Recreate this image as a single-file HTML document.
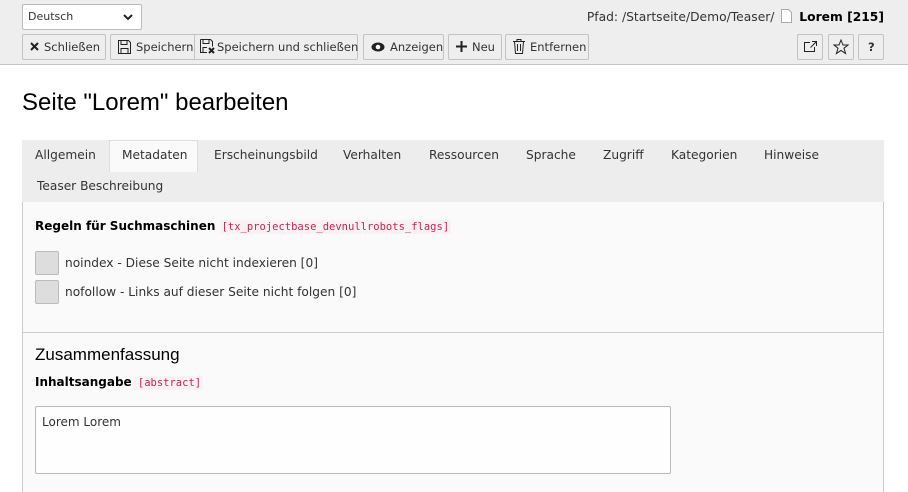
<!DOCTYPE html>
<html><head><meta charset="utf-8"><style>
*{box-sizing:border-box;margin:0;padding:0}
html,body{width:908px;height:492px;overflow:hidden}
body{background:#fff;font-family:"DejaVu Sans",Verdana,sans-serif;font-size:12px;color:#333;position:relative}
.a{position:absolute}
.top{left:0;top:0;width:908px;height:65px;background:#eee;border-bottom:1px solid #c3c3c3}
.btn{position:absolute;top:34px;height:26px;background:#eee;border:1px solid #c3c3c3;border-radius:2px;font-size:11.5px;line-height:24px;color:#333;white-space:nowrap;padding-left:7px}
.btn svg{vertical-align:middle;margin-right:5px;position:relative;top:-1px}
.sel{left:22px;top:4px;width:120px;height:26px;background:#fff;border:1px solid #bbb;border-radius:2px;font-size:11px;line-height:24px;padding-left:5px}
.tabs{left:22px;top:140px;width:862px;height:63px;background:#ededed;border-bottom:1px solid #ccc}
.tab{position:absolute;font-size:12.2px;line-height:31px;color:#333}
.panel{left:22px;top:202px;width:862px;height:300px;background:#fafafa;border:1px solid #ccc;border-top:none}
.code{font-family:"DejaVu Sans Mono",monospace;font-size:10.5px;color:#c7254e;background:#f9f2f4;padding:1px 2px}
.cb{position:absolute;left:35px;width:24px;height:24px;background:#ddd;border:1px solid #bbb;border-radius:2px}
</style></head><body>
<div class="a top"></div>
<div class="a sel">Deutsch<svg class="a" style="left:100px;top:9px" width="10" height="7" viewBox="0 0 10 7"><path d="M1 1l4 4 4-4" stroke="#222" stroke-width="2" fill="none"/></svg></div>
<div class="a" style="right:24px;top:9px;font-size:12.3px;color:#333">Pfad: /Startseite/Demo/Teaser/ <svg width="11" height="14" viewBox="0 0 11 14" style="vertical-align:-2px;margin:0 3px"><path d="M.5.5h7l3 3v10H.5z" fill="#fff" stroke="#aaa"/></svg> <b style="color:#000">Lorem [215]</b></div>

<div class="btn" style="left:22px;width:84px"><svg width="9" height="9" viewBox="0 0 9 9"><path d="M1 1l7 7M8 1L1 8" stroke="#222" stroke-width="2"/></svg>Schließen</div>
<div class="btn" style="left:110px;width:85px;border-radius:2px 0 0 2px"><svg width="13" height="14" viewBox="0 0 13 14"><path d="M.5.5h10l2 2v11H.5z M3 .5v4h6v-4 M3 13.5v-5h7v5" fill="none" stroke="#222"/></svg>Speichern</div>
<div class="btn" style="left:194px;width:164px;border-radius:0 2px 2px 0;padding-left:5px"><svg width="15" height="15" viewBox="0 0 15 15" style="margin-right:2px"><path d="M.5.5h10l2 2v5M7 13.5H.5v-13M3 .5v4h6v-4M3 13.5v-5h4" fill="none" stroke="#222"/><path d="M9 9l5 5M14 9l-5 5" stroke="#222" stroke-width="2"/></svg>Speichern und schließen</div>
<div class="btn" style="left:363px;width:81px"><svg width="14" height="10" viewBox="0 0 14 10"><ellipse cx="7" cy="5" rx="6.5" ry="4.5" fill="#222"/><circle cx="7" cy="5" r="2.3" fill="#fff"/></svg>Anzeigen</div>
<div class="btn" style="left:448px;width:54px"><svg width="11" height="11" viewBox="0 0 11 11"><path d="M5.5 0v11M0 5.5h11" stroke="#222" stroke-width="2"/></svg>Neu</div>
<div class="btn" style="left:505px;width:84px"><svg width="12" height="15" viewBox="0 0 12 15"><path d="M0 2.5h12M4 2.5V.5h4v2M1.5 2.5l1 12h7l1-12M4.5 5v7M7.5 5v7" fill="none" stroke="#222"/></svg>Entfernen</div>
<div class="btn" style="left:797px;width:26px;padding-left:6px"><svg width="13" height="11" viewBox="0 0 13 11"><path d="M6 1.5H.5v9h10V6M8 .5h4.5V5M12.5.5l-6 6" fill="none" stroke="#222"/></svg></div>
<div class="btn" style="left:828px;width:26px;padding-left:4px"><svg width="16" height="16" viewBox="0 0 16 16"><path d="M8 1l2 5h5l-4 3.2 1.6 5.3L8 11.4 3.4 14.5 5 9.2 1 6h5z" fill="none" stroke="#222"/></svg></div>
<div class="btn" style="left:858px;width:26px;padding-left:9px;font-weight:bold">?</div>

<div class="a" style="left:22px;top:89px;font-family:'Liberation Sans',sans-serif;font-size:24px;color:#000">Seite "Lorem" bearbeiten</div>

<div class="a tabs"></div>
<div class="a" style="left:109px;top:140px;width:89px;height:32px;background:#fafafa;border:1px solid #ddd;border-bottom:none"></div>
<div class="tab" style="left:35px;top:140px">Allgemein</div>
<div class="tab" style="left:122px;top:140px">Metadaten</div>
<div class="tab" style="left:214px;top:140px">Erscheinungsbild</div>
<div class="tab" style="left:343px;top:140px">Verhalten</div>
<div class="tab" style="left:429px;top:140px">Ressourcen</div>
<div class="tab" style="left:526px;top:140px">Sprache</div>
<div class="tab" style="left:603px;top:140px">Zugriff</div>
<div class="tab" style="left:671px;top:140px">Kategorien</div>
<div class="tab" style="left:764px;top:140px">Hinweise</div>
<div class="tab" style="left:37px;top:171px">Teaser Beschreibung</div>

<div class="a panel"></div>
<div class="a" style="left:22px;top:332px;width:862px;height:1px;background:#ccc"></div>
<div class="a" style="left:35px;top:219px;font-weight:bold;color:#000">Regeln für Suchmaschinen <span class="code" style="font-weight:normal">[tx_projectbase_devnullrobots_flags]</span></div>
<div class="cb" style="top:251px"></div><div class="a" style="left:65px;top:256px;font-size:12.2px">noindex - Diese Seite nicht indexieren [0]</div>
<div class="cb" style="top:280px"></div><div class="a" style="left:65px;top:285px;font-size:12.2px">nofollow - Links auf dieser Seite nicht folgen [0]</div>
<div class="a" style="left:35px;top:345px;font-size:17px;color:#000;font-family:'Liberation Sans',sans-serif">Zusammenfassung</div>
<div class="a" style="left:35px;top:375px;font-weight:bold;color:#000">Inhaltsangabe <span class="code" style="font-weight:normal">[abstract]</span></div>
<div class="a" style="left:35px;top:406px;width:636px;height:68px;background:#fefefe;border:1px solid #bbb;border-radius:2px;padding:8px 6px;font-size:12px">Lorem Lorem</div>
</body></html>
